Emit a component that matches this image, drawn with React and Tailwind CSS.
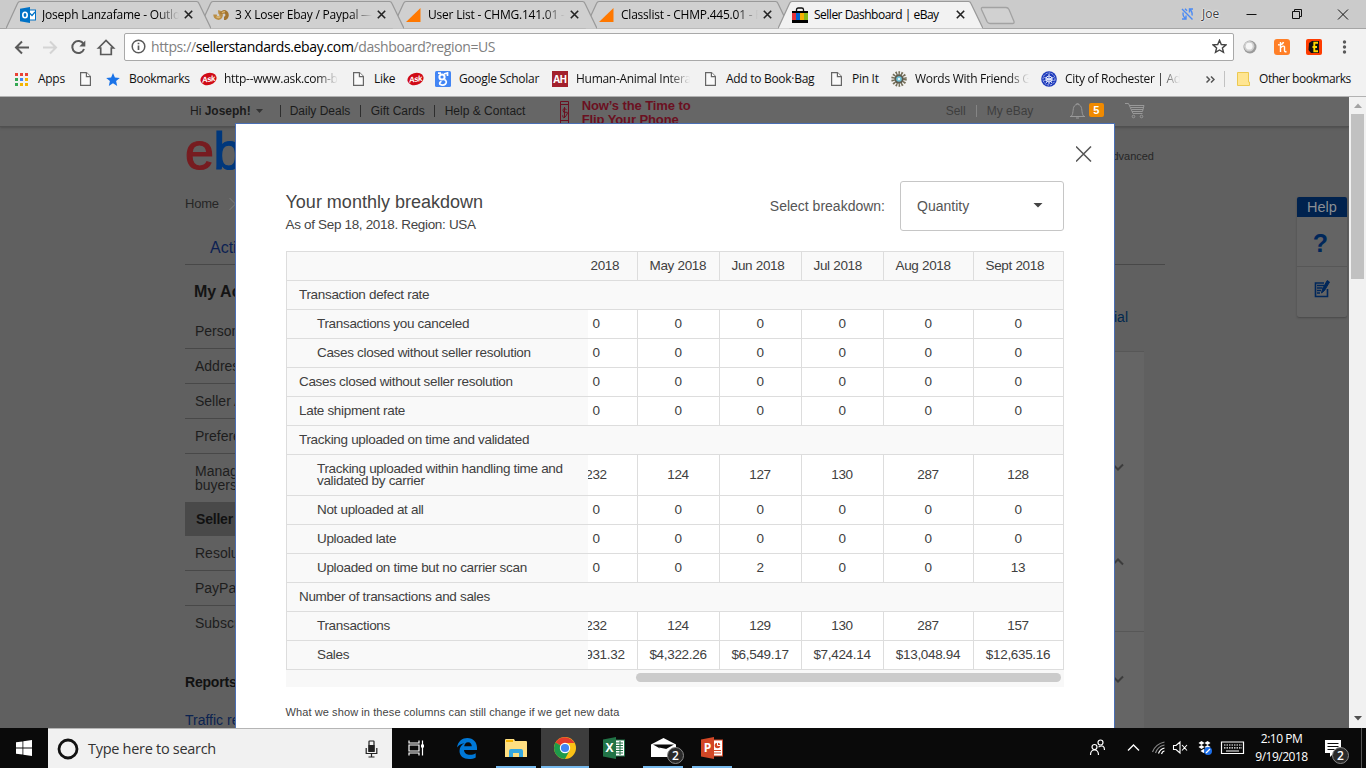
import React from "react";

const ui = "font-['Open_Sans','Noto_Sans',sans-serif]";
const arial = "font-['Liberation_Sans',Arial,sans-serif]";

/* ---------- tab strip ---------- */

const OutlookIcon = () => (
  <svg width="16" height="16" viewBox="0 0 16 16">
    <rect x="8" y="3" width="7.5" height="10" fill="#fff" stroke="#0072c6" />
    <path d="M8.5 5l3.5 3.5L15 5" fill="none" stroke="#0072c6" strokeWidth="1.2" />
    <path d="M0 1.8L10 0v16L0 14.2z" fill="#0072c6" />
    <ellipse cx="5" cy="8" rx="2.2" ry="2.8" fill="none" stroke="#fff" strokeWidth="1.6" />
  </svg>
);

const KnotIcon = () => (
  <svg width="16" height="16" viewBox="0 0 16 16" fill="none" strokeWidth="3.4">
    <path d="M2 7.500C2 11 6.500 12.500 7.800 9.500 8.800 7 7 4.800 5.200 5" stroke="#b98d45" />
    <path d="M11 11.300C14 11.300 15 7.500 13 5.500 11.500 4.200 9 4.500 8.600 6.800" stroke="#a3742f" />
    <path d="M3.500 9.500Q5.500 11.500 7.300 9.500" stroke="#dcb873" strokeWidth="1.600" />
    <path d="M9 6Q10 4.200 12 4.800" stroke="#d9b168" strokeWidth="1.500" />
  </svg>
);

const TriangleIcon = () => (
  <svg width="16" height="16" viewBox="0 0 16 16">
    <path d="M0 15L14.500 1v14z" fill="#ff7800" />
  </svg>
);

const BagIcon = () => (
  <svg width="16" height="16" viewBox="0 0 16 16">
    <path d="M4.500 5V2.800Q4.500 1 6.300 1h3.400q1.800 0 1.800 1.800V5" fill="none" stroke="#111" strokeWidth="1.300" />
    <rect y="4" width="16" height="12" fill="#000" />
    <rect y="6" width="4" height="7" fill="#e53238" />
    <rect x="4" y="6" width="4" height="7" fill="#0064d2" />
    <rect x="8" y="6" width="4" height="7" fill="#f5af02" />
    <rect x="12" y="6" width="4" height="7" fill="#86b817" />
  </svg>
);

const CloseMark = () => (
  <svg width="9" height="9" viewBox="0 0 9 9" stroke="#222" strokeWidth="1.600">
    <path d="M.800.800l7.400 7.400M8.200.800L.800 8.200" />
  </svg>
);

function Tab({ icon, title, active, z }) {
  return (
    <div className={`relative -mr-3 flex h-[29px] w-[205px] shrink-0 items-center pl-[14px] ${z}`}>
      <svg className="absolute inset-0" width="205" height="29" viewBox="0 0 205 29">
        <path
          d="M0 28.500L11.500 3.500Q12.300 1.500 14 1.500H190.500Q192.300 1.500 193 3.500L205 28.500"
          fill={active ? "#f2f2f2" : "#d0d0d0"}
          stroke="#999"
          strokeWidth="1.200"
        />
      </svg>
      <span className="relative">{icon}</span>
      <span
        className={`relative ml-[6px] w-[137px] overflow-hidden whitespace-nowrap text-[12px] leading-4 text-black ${
          active ? "tracking-[-0.5px]" : "tracking-[-0.22px] [mask-image:linear-gradient(to_right,black_84%,transparent)]"
        }`}
      >
        {title}
      </span>
      <span className="relative ml-[5px]"><CloseMark /></span>
    </div>
  );
}

function TabStrip() {
  return (
    <div className="flex h-[29px] shrink-0 items-start border-b border-[#a5a5a5] bg-[#cbcbcb] pl-[6px]">
      <Tab z="z-[4]" icon={<OutlookIcon />} title="Joseph Lanzafame - Outlook" />
      <Tab z="z-[3]" icon={<KnotIcon />} title="3 X Loser Ebay / Paypal — Best" />
      <Tab z="z-[2]" icon={<TriangleIcon />} title="User List - CHMG.141.01 - Fall" />
      <Tab z="z-[1]" icon={<TriangleIcon />} title="Classlist - CHMP.445.01 - Fall" />
      <Tab z="z-[5]" active icon={<BagIcon />} title="Seller Dashboard | eBay" />
      <svg className="ml-[9px] mt-[6px]" width="36" height="19" viewBox="0 0 36 19">
        <path d="M2.500 1.500h23.500q2 0 3 2l5 12q.500 2-1.500 2H10q-2 0-3-2l-5.500-12q-.5-2 1-2z" fill="#d1d1d1" stroke="#a2a2a2" strokeWidth="1.300" />
      </svg>
      <div className="ml-auto mr-[2px] flex h-[27px] items-center">
        <svg width="13" height="12" viewBox="0 0 13 12" fill="none" stroke="#4a8af4" strokeWidth="1.400">
          <path d="M1 1l10.500 10.500M1 11h4V7.500M5 11C2.500 9 1.500 7 2.200 4.500M12 1H8.500v3.500M8.500 1C11 3 11.500 5 11 7.500M4 .800l2 2" />
        </svg>
        <span className="ml-[8px] w-[44px] text-[12px] text-[#3c3c3c] [text-shadow:0_0_1px_#fff,0_0_2px_#fff,0_0_2px_#fff]">Joe</span>
        <svg width="118" height="14" viewBox="0 0 118 14" fill="none" stroke="#111" strokeWidth="1">
          <path d="M.500 7.500h10" />
          <path d="M46.500 4.500h7v7h-7zM48.500 4.500v-2h7v7h-2" />
          <path d="M92 2.500l10 10M102 2.500l-10 10" />
        </svg>
      </div>
    </div>
  );
}

/* ---------- toolbar ---------- */

function Toolbar() {
  return (
    <div className="flex h-[35px] shrink-0 items-center bg-[#f2f2f2] pl-[14px]">
      <svg width="104" height="20" viewBox="0 0 104 20" fill="none" stroke="#5a5a5a" strokeWidth="2">
        <path d="M15 10.500H2M8 4.500l-6 6 6 6" />
        <path d="M29 10.500h13M36 4.500l6 6-6 6" stroke="#d4d4d4" />
        <path d="M69.500 7A6 6 0 1 0 70 12" />
        <path d="M71.300 3.500v6h-6z" fill="#5a5a5a" stroke="none" />
        <path d="M84.500 11l7.500-7.500L99.500 11h-2.200v6.500H86.700V11z" strokeWidth="1.700" />
      </svg>
      <div className="ml-[6px] flex h-[28px] w-[1110px] items-center rounded-[2px] border border-[#a9a9a9] bg-white pl-[6px]">
        <svg width="15" height="15" viewBox="0 0 15 15" fill="none" stroke="#5a5a5a">
          <circle cx="7.500" cy="7.500" r="6.300" strokeWidth="1.500" />
          <path d="M7.500 6.500v4.500M7.500 3.700v1.600" strokeWidth="1.700" />
        </svg>
        <span className="ml-[5px] text-[14px] leading-5 tracking-[-0.39px] text-[#808080]">
          https://<span className="text-black">sellerstandards.ebay.com</span>/dashboard?region=US
        </span>
        <svg className="ml-auto mr-[6px]" width="15" height="15" viewBox="0 0 15 15">
          <path d="M7.500 1.300l1.800 4.200 4.600.400-3.500 3 1.100 4.500-4-2.400-4 2.400 1.100-4.500-3.500-3 4.600-.400z" fill="none" stroke="#444" strokeWidth="1.400" />
        </svg>
      </div>
      <svg className="ml-[9px]" width="14" height="14" viewBox="0 0 14 14">
        <circle cx="7" cy="7" r="6.500" fill="#9a9a9a" />
        <circle cx="6.200" cy="6.200" r="5.200" fill="#cfcfcf" />
        <circle cx="6.200" cy="6.200" r="3.400" fill="#f6f6f6" />
      </svg>
      <svg className="ml-[17px]" width="16" height="16" viewBox="0 0 16 16">
        <rect width="16" height="16" rx="3" fill="#ff7f27" />
        <path d="M6.500 3v10M6.500 9q3-3 4-1.200v3.700q0 1.800 2 1M4 5.800q4.500.500 5.500-2.800" fill="none" stroke="#fff" strokeWidth="1.400" />
      </svg>
      <svg className="ml-[16px]" width="16" height="16" viewBox="0 0 16 16">
        <rect width="16" height="16" rx="2" fill="#ff3c00" />
        <path d="M3 4l3-2h7v12H5L2.500 11z" fill="#111" />
        <path d="M12 3.800H8.300v8.400H12M6.500 8H11" fill="none" stroke="#ffd800" strokeWidth="1.900" />
      </svg>
      <svg className="ml-[20px]" width="5" height="16" viewBox="0 0 5 16" fill="#5a5a5a">
        <circle cx="2.500" cy="3" r="1.700" /><circle cx="2.500" cy="8" r="1.700" /><circle cx="2.500" cy="13" r="1.700" />
      </svg>
    </div>
  );
}

/* ---------- bookmarks ---------- */

const PageIcon = () => (
  <svg width="11" height="14" viewBox="0 0 11 14" fill="#fafafa" stroke="#666" strokeWidth="1.200">
    <path d="M.600.600h5.800l4 4v8.800H.600z" /><path d="M6.400.600v4h4" />
  </svg>
);

const AskIcon = () => (
  <svg width="17" height="14" viewBox="0 0 17 14">
    <ellipse cx="8.500" cy="7" rx="8.200" ry="6" fill="#d00b16" transform="rotate(-16 8.500 7)" />
    <text x="8.300" y="9.800" textAnchor="middle" fontSize="8" letterSpacing="-0.500" fontStyle="italic" fontWeight="bold" fill="#fff" fontFamily="Liberation Sans" transform="rotate(-8 8.500 7)">Ask</text>
  </svg>
);

const AppsIcon = () => (
  <svg width="13" height="13" viewBox="0 0 13 13">
    <path d="M0 0h3v3H0zM5 0h3v3H5zM10 0h3v3h-3z" fill="#ea4335" />
    <path d="M0 5h3v3H0zM0 10h3v3H0z" fill="#34a853" />
    <path d="M5 5h3v3H5z" fill="#4285f4" />
    <path d="M10 5h3v3h-3zM5 10h3v3H5zM10 10h3v3h-3z" fill="#f4b400" />
  </svg>
);

const StarIcon = () => (
  <svg width="14" height="13" viewBox="0 0 14 13">
    <path d="M7 0l1.900 4.500 4.900.400-3.700 3.200L11.200 13 7 10.300 2.800 13l1.100-4.900L.200 4.900l4.900-.400z" fill="#1a73e8" />
  </svg>
);

const ScholarIcon = () => (
  <svg width="16" height="16" viewBox="0 0 16 16">
    <rect width="16" height="16" rx="1.500" fill="#4285f4" />
    <circle cx="7" cy="6" r="2.600" fill="none" stroke="#fff" strokeWidth="2" />
    <path d="M3 2.200h3M9 3l3.500-1v3M9.500 8.500q3 2 1 4.500-2.500 2-5.500.300-1-2 1.500-3" fill="none" stroke="#fff" strokeWidth="1.700" />
  </svg>
);

const AhIcon = () => (
  <span className="flex h-4 w-4 items-center justify-center bg-[#a3202c] text-[10px] font-bold leading-none tracking-[-0.5px] text-white">AH</span>
);

const SunIcon = () => (
  <svg width="16" height="16" viewBox="0 0 16 16">
    <circle cx="8" cy="8" r="6" fill="none" stroke="#736d57" strokeWidth="3.500" strokeDasharray="1.500 1.200" />
    <circle cx="8" cy="8" r="4.700" fill="#5e5b4d" />
    <circle cx="8" cy="8" r="2.800" fill="#6cc3dc" />
    <circle cx="8" cy="8" r="1.200" fill="#e6f6fa" />
  </svg>
);

const CityIcon = () => (
  <svg width="16" height="16" viewBox="0 0 16 16">
    <circle cx="8" cy="8" r="7.800" fill="#1c39bb" />
    <circle cx="8" cy="8" r="6" fill="none" stroke="#b9c4f0" strokeDasharray="2 1" />
    <path d="M8 3v10M3.500 6.500l9 3M12.500 6.500l-9 3M5 12l3-4 3 4" stroke="#dfe5fb" fill="none" />
    <circle cx="8" cy="8" r="3" fill="none" stroke="#dfe5fb" />
  </svg>
);

const fade = "overflow-hidden [mask-image:linear-gradient(to_right,black_82%,transparent)]";

const bookmarks = [
  { w: "w-[65px]", gap: "ml-[10px]", icon: <AppsIcon />, label: "Apps" },
  { w: "w-[26px]", icon: <PageIcon /> },
  { w: "w-[94px]", gap: "ml-[9px]", icon: <StarIcon />, label: "Bookmarks" },
  { w: "w-[153px]", gap: "ml-[7px]", icon: <AskIcon />, label: "http--www.ask.com-bar", clip: "w-[114px]" },
  { w: "w-[54px]", gap: "ml-[10px]", icon: <PageIcon />, label: "Like" },
  { w: "w-[28px]", icon: <AskIcon /> },
  { w: "w-[117px]", gap: "ml-[8px]", icon: <ScholarIcon />, label: "Google Scholar" },
  { w: "w-[153px]", gap: "ml-[8px]", icon: <AhIcon />, label: "Human-Animal Interaction", clip: "w-[114px]" },
  { w: "w-[126px]", gap: "ml-[10px]", icon: <PageIcon />, label: "Add to Book·Bag" },
  { w: "w-[60px]", gap: "ml-[10px]", icon: <PageIcon />, label: "Pin It" },
  { w: "w-[150px]", gap: "ml-[8px]", icon: <SunIcon />, label: "Words With Friends Games", clip: "w-[114px]" },
  { w: "w-[165px]", gap: "ml-[8px]", icon: <CityIcon />, label: "City of Rochester | Adopt", clip: "w-[115px]" },
];

function BookmarksBar() {
  return (
    <div className="flex h-[33px] shrink-0 items-center border-b border-[#b2b2b2] bg-[#f2f2f2] pb-[2px] pl-[15px] text-[12px] leading-4 tracking-[-0.29px] text-[#111]">
      {bookmarks.map((b, i) => (
        <div key={i} className={`flex shrink-0 items-center whitespace-nowrap ${b.w}`}>
          {b.icon}
          {b.label && <span className={`${b.gap} ${b.clip ? `${fade} ${b.clip}` : ""}`}>{b.label}</span>}
        </div>
      ))}
      <svg className="mt-px shrink-0" width="9" height="7" viewBox="0 0 9 7" fill="none" stroke="#555" strokeWidth="1.500">
        <path d="M.500.500l3 3-3 3M5 .500l3 3-3 3" />
      </svg>
      <span className="ml-[9px] h-4 w-px bg-[#c2c2c2]" />
      <svg className="ml-[12px] shrink-0" width="13" height="14" viewBox="0 0 13 14">
        <path d="M.500.500h11v9.500h1v3.500H.500z" fill="#ffe591" stroke="#ecc951" />
      </svg>
      <span className="ml-[9px] whitespace-nowrap tracking-[-0.45px]">Other bookmarks</span>
    </div>
  );
}

/* ---------- dimmed page ---------- */

function SiteHeader() {
  return (
    <div className="flex h-[30px] shrink-0 items-center border-b border-[#505050] bg-[#666] pb-[2px] pl-[190px] text-[12px] text-[#1b1b1b] shadow-[0_1px_2px_#4e4e4e]">
      <span>Hi <b>Joseph!</b></span>
      <svg className="ml-[5px]" width="7" height="4" viewBox="0 0 7 4"><path d="M0 0h7L3.500 4z" fill="#333" /></svg>
      <span className="ml-[17px] h-3 w-px bg-[#2e2e2e]" />
      <span className="ml-[9px] w-[61px]">Daily Deals</span>
      <span className="ml-[9px] h-3 w-px bg-[#2e2e2e]" />
      <span className="ml-[10px] w-[54px]">Gift Cards</span>
      <span className="ml-[9px] h-3 w-px bg-[#2e2e2e]" />
      <span className="ml-[10px] w-[82px]">Help &amp; Contact</span>
      <svg className="ml-[33px] mt-[3px]" width="9" height="27" viewBox="0 0 9 27" fill="none" stroke="#6b1021">
        <path d="M.500 2.500h8v22h-8zM.500 5.500h8M.500 21.500h8" />
        <path d="M6.500 10.500q-3.500-2-3.500.800t3 2 0 3.500-3.300-.5M4.500 8v11" />
      </svg>
      <div className="-mb-[2px] ml-[13px] h-[29px] w-[364px] self-end overflow-hidden pt-[2px] text-[13px] font-bold leading-[14px] tracking-[-0.1px] text-[#6b1021]">
        Now’s the Time to<br />Flip Your Phone
      </div>
      <span className="w-[22px] text-[#3e3e3e]">Sell</span>
      <span className="ml-[8px] h-3 w-px bg-[#858585]" />
      <span className="ml-[10px] w-[48px] whitespace-nowrap text-[#3e3e3e]">My eBay</span>
      <svg className="ml-[34px]" width="17" height="17" viewBox="0 0 17 17" fill="none" stroke="#999">
        <path d="M1 14.500h15M2.500 14C5 11 3 5 6.500 3q2-1.500 4 0C14 5 12 11 14.500 14M7 2.500q1.500-3 3 0M7 16h3" />
      </svg>
      <span className="-mt-px ml-[3px] flex h-[14px] w-[15px] items-center justify-center rounded-[2px] bg-[#f08a00] text-[11px] font-bold leading-none text-white">5</span>
      <svg className="ml-[21px]" width="20" height="17" viewBox="0 0 20 17" fill="none" stroke="#999">
        <path d="M0 1.500h3.500L8 11.500h9.500M4.500 3.500h14.500l-1.500 6H7M5.500 5.500H18M6.500 7.500H18" />
        <circle cx="8.500" cy="14.500" r="1.300" /><circle cx="16.500" cy="14.500" r="1.300" />
      </svg>
    </div>
  );
}

const navRow = "flex h-[35px] items-center whitespace-nowrap pl-[10px] border-b border-[#484848]";

function SiteNav() {
  return (
    <div className="w-[60px] overflow-hidden text-[14px] text-[#1d1d1d]">
      <div className="flex h-[49px] items-center whitespace-nowrap pl-[9px] pt-[5px] text-[16px] font-bold text-[#141414]">My Account</div>
      <div className={navRow}>Personal</div>
      <div className={navRow}>Addresses</div>
      <div className={navRow}>Seller A</div>
      <div className={navRow}>Preferences</div>
      <div className="flex h-[48px] items-center whitespace-nowrap pl-[10px] leading-[14px]">
        <span>Manage<br />buyers</span>
      </div>
      <div className="flex h-[34px] items-center bg-[#494949] pl-[11px] font-bold tracking-[-0.2px] text-[#111]">Seller</div>
      <div className={navRow}>Resolution</div>
      <div className={navRow}>PayPal</div>
      <div className="flex h-[35px] items-center pl-[10px]">Subscriptions</div>
      <div className="mt-[31px] h-[18px] font-bold tracking-[-0.2px] text-[#111]">Reports</div>
      <div className="mt-[20px] whitespace-nowrap text-[#0b2350]">Traffic report</div>
    </div>
  );
}

const Chevron = ({ up }) => (
  <svg className={up ? "rotate-180" : ""} width="12" height="8" viewBox="0 0 12 8" fill="none" stroke="#3c3c3c" strokeWidth="2">
    <path d="M1 1.500l5 5 5-5" />
  </svg>
);

function HelpWidget() {
  return (
    <div className="mt-[70px] h-[120px] w-[50px] rounded-[2px] bg-[#646464] shadow-[0_1px_2px_#484848]">
      <div className="flex h-[20px] items-center justify-center rounded-t-[2px] bg-[#00224e] text-[14.500px] leading-none text-[#8b8f94]">Help</div>
      <div className="flex h-[50px] items-center justify-center border-b border-[#575757] pr-[3px] pt-[4px] text-[25px] font-bold text-[#00275a]">?</div>
      <div className="flex h-[49px] items-center justify-center pb-[6px]">
        <svg width="16" height="20" viewBox="0 0 16 20" fill="none" stroke="#00275a">
          <path d="M10 4H1.500v13.500h12V10" strokeWidth="1.600" />
          <path d="M3 6.500h7M3 9h5.500M3 11.500h4M3 14h3" strokeWidth="1.300" />
          <path d="M7.500 14l1-4L13.200 1.500l2.300 1.500-5 8.500z" fill="#00275a" />
        </svg>
      </div>
    </div>
  );
}

function SitePage() {
  return (
    <div className="flex h-[631px] w-[1349px] flex-col overflow-hidden bg-[#606060]">
      <SiteHeader />
      <div className="flex flex-1">
        <div className="ml-[185px] w-[980px]">
          <div className="flex h-[66px] justify-between">
            <div className="-mt-[2px] text-[52px] leading-[52px] tracking-[-0.5px] [-webkit-text-stroke-width:1.200px]">
              <span className="text-[#771c20]">e</span><span className="text-[#00387c]">b</span>
            </div>
            <span className="mr-[11px] mt-[21px] text-[11px] text-[#262626]">Advanced</span>
          </div>
          <div className="flex h-[22px] items-center text-[13px] tracking-[-0.2px] text-[#262626]">
            Home
            <svg className="ml-[10px]" width="7" height="14" viewBox="0 0 7 14" fill="none" stroke="#7d7d7d"><path d="M.500 1l6 6-6 6" /></svg>
          </div>
          <div className="h-[50px] border-b border-[#484848] pl-[25px] pt-[21px] text-[16px] text-[#0c1f52]">Activity</div>
          <div className="flex justify-between">
            <SiteNav />
            <div className="mr-[21px] w-[60px]">
              <div className="flex h-[86px] items-start justify-end pr-[16px] pt-[42px] text-[14px] text-[#00284e]">Tutorial</div>
              <div className="flex h-[281px] flex-col items-end border-b border-t border-[#575757] bg-[#656565] pr-[20px] pt-[111px]">
                <Chevron />
                <span className="mt-[87px]"><Chevron up /></span>
              </div>
              <div className="flex h-[110px] justify-end bg-[#656565] pr-[20px] pt-[43px]"><Chevron /></div>
            </div>
          </div>
        </div>
        <div className="ml-[132px]"><HelpWidget /></div>
      </div>
    </div>
  );
}

function PageScrollbar() {
  return (
    <div className="flex h-full w-[17px] flex-col items-center bg-[#f1f1f1]">
      <svg className="mt-[6px]" width="8" height="5" viewBox="0 0 8 5"><path d="M0 5h8L4 .500z" fill="#a3a3a3" /></svg>
      <span className="mt-[6px] h-[165px] w-[13px] bg-[#c1c1c1]" />
      <svg className="mb-[7px] mt-auto" width="8" height="5" viewBox="0 0 8 5"><path d="M0 0h8L4 4.500z" fill="#505050" /></svg>
    </div>
  );
}

/* ---------- dialog ---------- */

const columns = ["w-[82px]", "w-[82px]", "w-[82px]", "w-[90px]", "w-[90px]"];
const months = ["May 2018", "Jun 2018", "Jul 2018", "Aug 2018", "Sept 2018"];
const zeros = ["0", "0", "0", "0", "0", "0"];

const rows = [
  { label: "Transaction defect rate" },
  { label: "Transactions you canceled", sub: true, values: zeros },
  { label: "Cases closed without seller resolution", sub: true, values: zeros },
  { label: "Cases closed without seller resolution", values: zeros },
  { label: "Late shipment rate", values: zeros },
  { label: "Tracking uploaded on time and validated" },
  { label: "Tracking uploaded within handling time and validated by carrier", sub: true, tall: true, values: ["232", "124", "127", "130", "287", "128"] },
  { label: "Not uploaded at all", sub: true, values: zeros },
  { label: "Uploaded late", sub: true, values: zeros },
  { label: "Uploaded on time but no carrier scan", sub: true, values: ["0", "0", "2", "0", "0", "13"] },
  { label: "Number of transactions and sales" },
  { label: "Transactions", sub: true, values: ["232", "124", "129", "130", "287", "157"] },
  { label: "Sales", sub: true, values: ["$7,931.32", "$4,322.26", "$6,549.17", "$7,424.14", "$13,048.94", "$12,635.16"] },
];

function BreakdownTable() {
  return (
    <div className="w-[778px] text-[13.500px] tracking-[-0.32px] text-[#404040]">
      <div className="border-l border-t border-[#ddd]">
        <div className="flex h-[29px] border-b border-[#ddd] bg-[#f9f9f9]">
          <div className="w-[301px]" />
          <div className="flex w-[50px] items-center justify-end overflow-hidden border-r border-[#ddd]">
            <span className="w-[70px] shrink-0">Apr 2018</span>
          </div>
          {months.map((m, i) => (
            <div key={m} className={`flex items-center whitespace-nowrap border-r border-[#ddd] pl-[11.500px] ${columns[i]}`}>{m}</div>
          ))}
        </div>
        {rows.map((r, i) => (
          <div key={i} className={`flex border-b border-[#ddd] ${r.tall ? "h-[41px]" : "h-[29px]"} ${r.values ? "bg-white" : "border-r bg-[#f9f9f9]"}`}>
            <div className={`flex w-[301px] shrink-0 items-center bg-[#f9f9f9] leading-[12px] ${r.sub ? "pl-[30px] pr-[20px]" : "pl-[12px]"}`}>{r.label}</div>
            {r.values && (
              <>
                <div className="flex w-[50px] items-center justify-end overflow-hidden border-r border-[#ddd]">
                  <span className="w-[82px] shrink-0 text-center">{r.values[0]}</span>
                </div>
                {r.values.slice(1).map((v, j) => (
                  <div key={j} className={`flex items-center justify-center border-r border-[#ddd] pr-px ${columns[j]}`}>{v}</div>
                ))}
              </>
            )}
          </div>
        ))}
      </div>
      <div className="flex h-[17px] justify-end bg-[#f8f8f8] pr-[3px] pt-[3px]">
        <span className="h-[9px] w-[425px] rounded-full bg-[#cbcbcb]" />
      </div>
    </div>
  );
}

function BreakdownDialog() {
  return (
    <div className="absolute left-[235px] top-[26px] h-[605px] w-[880px] border-l border-r border-t border-[#4a6fb5] bg-white pl-[50px] pr-[50px]">
      <div className="-mr-[28px] flex h-[57px] justify-end pt-[22px]">
        <svg width="16" height="16" viewBox="0 0 16 16" stroke="#555" strokeWidth="1.500"><path d="M0 .500l15 15M15 .500l-15 15" /></svg>
      </div>
      <div className="flex h-[70px] justify-between">
        <div className="-ml-[0.500px]">
          <h2 className="mt-[9px] text-[18px] leading-6 text-[#444]">Your monthly breakdown</h2>
          <p className="mt-[2px] text-[13.500px] leading-[17px] tracking-[-0.33px] text-[#444]">As of Sep 18, 2018. Region: USA</p>
        </div>
        <div className="flex h-[50px] items-center text-[14px] text-[#555]">
          <span>Select breakdown:</span>
          <div className="ml-[15px] flex h-[50px] w-[164px] items-center rounded-[3px] border border-[#c6c6c6] pl-[16px] pr-[20px]">
            <span>Quantity</span>
            <svg className="ml-auto mt-[-2px]" width="10" height="5" viewBox="0 0 10 5"><path d="M.500 0h9L5 4.500z" fill="#444" /></svg>
          </div>
        </div>
      </div>
      <BreakdownTable />
      <p className="-ml-[0.500px] mt-[17px] text-[11px] leading-4 tracking-[0.095px] text-[#444]">What we show in these columns can still change if we get new data</p>
    </div>
  );
}

/* ---------- taskbar ---------- */

const Badge = ({ at }) => (
  <span className={`absolute bottom-[4px] flex h-[17px] w-[17px] items-center justify-center rounded-full border border-[#888] bg-[#2a2a2a] text-[12px] font-semibold leading-none text-white ${at}`}>2</span>
);

function OfficeIcon({ color, letter, children }) {
  return (
    <svg width="22" height="22" viewBox="0 0 22 22">
      <rect x="11" y="3" width="10.500" height="16" fill="#fff" stroke={color} />
      {children}
      <path d="M0 2.500L13 0v22L0 19.500z" fill={color} />
      <text x="6.500" y="15.300" textAnchor="middle" fontSize="12" fontWeight="bold" fill="#fff" fontFamily="Open Sans">{letter}</text>
    </svg>
  );
}

function Task({ children, line, wide, active }) {
  return (
    <div className={`relative flex h-10 w-[48px] flex-col items-center justify-center ${active ? "bg-[#3d3d3d]" : ""}`}>
      {children}
      {line && <span className={`absolute bottom-0 h-[2px] bg-[#76b9ed] ${wide ? "w-[48px]" : "w-[40px]"}`} />}
    </div>
  );
}

function Taskbar() {
  return (
    <div className="flex h-10 shrink-0 items-center bg-[#0a0a0a] text-white">
      <div className="flex w-12 justify-center">
        <svg width="16" height="16" viewBox="0 0 16 16" fill="#fff">
          <path d="M0 2.300L6.500 1.400v6.200H0zM7.300 1.300L16 0v7.600H7.300zM0 8.400h6.500v6.200L0 13.700zM7.300 8.400H16V16l-8.700-1.200z" />
        </svg>
      </div>
      <div className="flex h-10 w-[344px] items-center border-t border-[#b5b5b5] bg-[#f1f1f1] pl-[9px]">
        <svg width="22" height="22" viewBox="0 0 22 22"><circle cx="11" cy="11" r="9" fill="none" stroke="#111" strokeWidth="2.800" /></svg>
        <span className="ml-[9px] text-[14.500px] tracking-[-0.29px] text-[#333]">Type here to search</span>
        <svg className="ml-auto mr-[14px]" width="13" height="18" viewBox="0 0 13 18" fill="none" stroke="#222" strokeWidth="1.200">
          <rect x="4" y="1" width="5" height="10.500" rx=".500" /><path d="M4 5.500h5v6H4z" fill="#222" />
          <path d="M1.200 8v5.500h10.600V8M6.500 13.500V17M3.500 17h6" />
        </svg>
      </div>
      <Task>
        <svg width="17" height="16" viewBox="0 0 17 16" fill="none" stroke="#fff" strokeWidth="1.200">
          <path d="M1 .500V3h10V.500M1 15.500V13h10v2.500M1 5h10v6H1zM14.500.500v15" /><path d="M13 4.500h3v3h-3z" fill="#fff" stroke="none" />
        </svg>
      </Task>
      <div className="ml-[3px] flex gap-px">
        <Task>
          <svg width="20" height="21" viewBox="0 0 20 21">
            <path d="M0 9.500C1 3 5.500 0 10.300 0 16.500 0 20 4.500 20 9.700V12H7c.3 3.500 3 4.800 6 4.800 2.300 0 4-.6 5.700-1.600v4.300C17 20.500 14.500 21 12 21 6.500 21 2.500 18 2.500 13c0-3.500 1.800-6.300 5-7.800C4.500 5.500 2 7 0 9.500zM7.200 8.300h7.600c0-2.300-1.400-4-3.700-4S7.500 6 7.200 8.300z" fill="#0078d7" />
          </svg>
        </Task>
        <Task line>
          <svg width="22" height="18" viewBox="0 0 22 18">
            <path d="M0 1q0-1 1-1h8l1 2h11q1 0 1 1v15H0z" fill="#ffdf81" /><path d="M1 1h7v2H1z" fill="#f8b500" />
            <path d="M4 18v-6q0-2 2-2h10q2 0 2 2v6h-4v-4H8v4z" fill="#35a8e0" />
          </svg>
        </Task>
        <Task line wide active>
          <svg width="22" height="22" viewBox="0 0 22 22">
            <circle cx="11" cy="11" r="11" fill="#fbc116" />
            <path d="M11 11L1.500 5.500A11 11 0 0 1 20.500 6H11z" fill="#e33b2e" />
            <path d="M1.500 5.500A11 11 0 0 0 11 22l4.500-8.500L11 11z" fill="#1e9a4b" />
            <circle cx="11" cy="11" r="5.200" fill="#fff" /><circle cx="11" cy="11" r="4.100" fill="#4285f4" />
          </svg>
        </Task>
        <Task>
          <OfficeIcon color="#217346" letter="X"><path d="M13 6h7M13 8.500h7M13 11h7M13 13.500h7M13 16h7M17 4v14" stroke="#217346" /></OfficeIcon>
        </Task>
        <Task line>
          <svg width="25" height="20" viewBox="0 0 25 20">
            <path d="M0 6.500L12.500 0 25 6.500V19H0z" fill="#fff" /><path d="M2 6.500h21l-10.500 6z" fill="#0a0a0a" /><path d="M8 9.500l4.500 6.500 3-5" fill="#fff" />
          </svg>
          <Badge at="right-[3px]" />
        </Task>
        <Task line>
          <OfficeIcon color="#d24726" letter="P"><circle cx="16.500" cy="8.500" r="2.800" fill="#d24726" /><path d="M16.500 8.500V5M16.500 8.500h3.500" stroke="#fff" /><path d="M13 13.500h7M13 16h7" stroke="#d24726" /></OfficeIcon>
        </Task>
      </div>
      <svg className="ml-auto" width="156" height="20" viewBox="0 0 156 20" fill="none" stroke="#fff" strokeWidth="1.200">
        <circle cx="5.500" cy="9" r="2.500" /><path d="M1.500 17q0-5 4-5t4 5" /><circle cx="11.500" cy="4.500" r="2.500" /><path d="M9.500 9q6-3 6 3" />
        <path d="M39 12.500l5.500-5.500 5.500 5.500" strokeWidth="1.400" />
        <g stroke="#888"><path d="M63.500 14Q66.500 6 75.500 4M66.500 15Q68.500 8.500 75.500 7" /><path d="M69.500 15.500Q71 11 75.500 10M72.500 16q1-3 3-3" stroke="#fff" /></g>
        <path d="M84.500 7.500h2.500l4-3.500v11l-4-3.500h-2.500zM93 7l5 5.500M98 7l-5 5.500" strokeWidth="1.100" />
        <g stroke="none" fill="#fff"><path d="M109.500 5l3-2 3 2-3 2zM115.500 5l3-2 3 2-3 2zM109.500 9l3-2 3 2-3 2zM115.500 9l3-2 3 2-3 2zM111.500 13l3-2 3 2-3 2z" /><circle cx="119" cy="13" r="4" fill="#1c6ee8" /></g>
        <path d="M117 15l4-4" />
        <path d="M132.500 4h22v11.500h-22zM137 13h13" />
        <path d="M135 7h18M135 9.800h18" strokeDasharray="1.500 1" />
      </svg>
      <div className="ml-[8px] w-[57px] whitespace-nowrap text-center text-[12px] leading-[19px] tracking-[-0.5px]">
        <div className="-mt-px">2:10 PM</div><div className="-mt-px">9/19/2018</div>
      </div>
      <div className="relative ml-[15px] flex h-10 items-center">
        <svg width="16" height="17" viewBox="0 0 16 17"><path d="M0 0h16v13H9l-4 4v-4H0z" fill="#fff" /><path d="M2.500 3.500h11M2.500 6.500h11M2.500 9.500h7" stroke="#0a0a0a" /></svg>
        <Badge at="right-[-8px]" />
      </div>
      <span className="ml-[20px] mr-[4px] h-10 w-px bg-[#555]" />
    </div>
  );
}

export default function App() {
  return (
    <div className={`flex h-[768px] w-[1366px] flex-col overflow-hidden ${ui}`}>
      <TabStrip />
      <Toolbar />
      <BookmarksBar />
      <div className={`relative flex h-[631px] shrink-0 overflow-hidden ${arial}`}>
        <SitePage />
        <PageScrollbar />
        <BreakdownDialog />
      </div>
      <Taskbar />
    </div>
  );
}
